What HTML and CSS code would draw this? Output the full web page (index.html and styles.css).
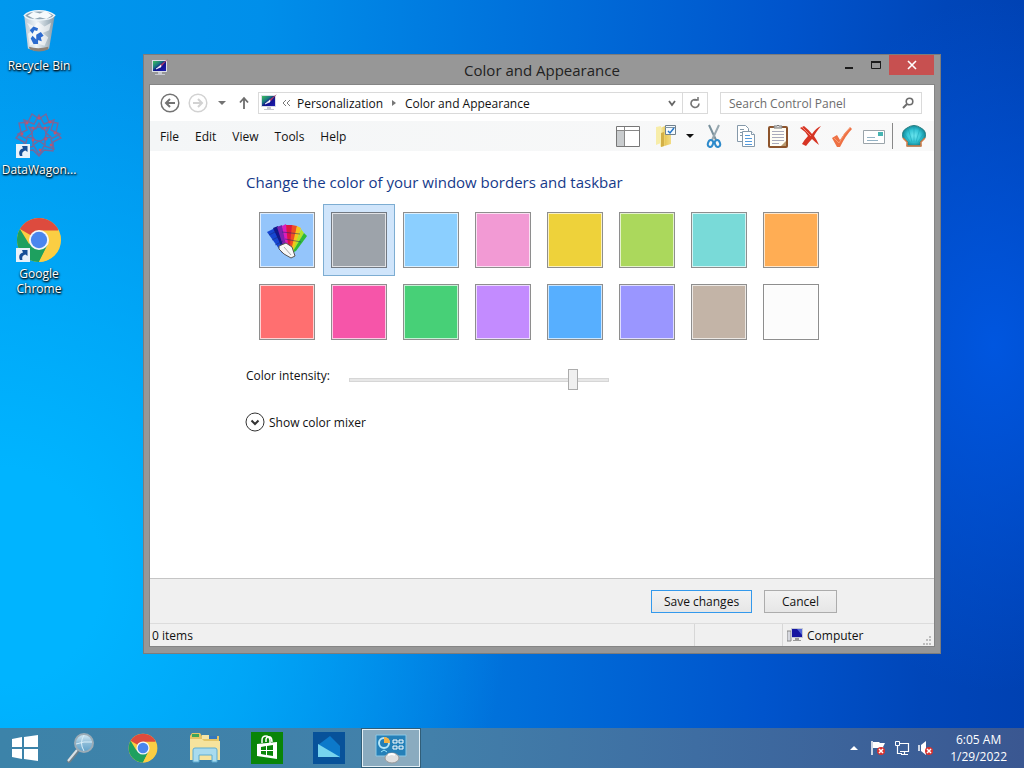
FILE: index.html
```html
<!DOCTYPE html>
<html lang="en">
<head>
<meta charset="utf-8">
<meta name="viewport" content="width=device-width, initial-scale=1">
<title>Color and Appearance</title>
<link rel="stylesheet" href="styles.css">
</head>
<body>
<svg class="defs" width="0" height="0" aria-hidden="true">
  <defs>
    <linearGradient id="screen" x1="0" y1="0" x2="1" y2="1"><stop offset="0" stop-color="#3fbf5a"/><stop offset=".35" stop-color="#1a7a80"/><stop offset=".55" stop-color="#10108c"/><stop offset="1" stop-color="#2020b0"/></linearGradient>
    <linearGradient id="folder" x1="0" y1="0" x2="1" y2="0"><stop offset="0" stop-color="#fbf3b8"/><stop offset=".5" stop-color="#e8c95c"/><stop offset="1" stop-color="#f3dd86"/></linearGradient>
    <linearGradient id="glass" x1="0" y1="0" x2="0" y2="1"><stop offset="0" stop-color="#d8ecf6"/><stop offset=".5" stop-color="#8dbcd8"/><stop offset="1" stop-color="#5fa0c8"/></linearGradient>
    <radialGradient id="shell"><stop offset="0" stop-color="#6fe9f2"/><stop offset=".6" stop-color="#34c3d4"/><stop offset="1" stop-color="#128a9a"/></radialGradient>
    <linearGradient id="bin" x1="0" y1="0" x2="1" y2="0"><stop offset="0" stop-color="#b8c8d4"/><stop offset=".4" stop-color="#eef4f8"/><stop offset="1" stop-color="#8398a6"/></linearGradient>
    <symbol id="chrome" viewBox="0 0 48 48">
      <circle cx="24" cy="24" r="23" fill="#fbce43"/>
      <path d="M24 24 4.100 12.500A23 23 0 0 1 43.900 12.500L43.900 14H24z" fill="#dd4b3e"/>
      <path d="M4.100 12.500A23 23 0 0 0 24 47L33 29.500 24 24 13.500 28z" fill="#1ea05f"/>
      <path d="M24 47 33 29 44 14A23 23 0 0 1 24 47z" fill="#fbce43"/>
      <circle cx="24" cy="24" r="10.500" fill="#f4f6f8"/><circle cx="24" cy="24" r="8.500" fill="#4a86ee"/>
    </symbol>
    <symbol id="shortcut" viewBox="0 0 14 14">
      <path d="M0 0h14v14H0z" fill="#e9f2fa"/>
      <path d="M4 12C2 8 4 5 7 4.500L6 2h5.500v6L9.500 6.500C7 7 5.500 9 6.500 12z" fill="#174f96"/>
    </symbol>
    <symbol id="monitor" viewBox="0 0 18 18">
      <path d="M1 1h15v12H1z" fill="#d9dde6"/><path d="M2 2h13v10H2z" fill="url(#screen)"/>
      <path d="M7 13h4v2h3v1H4v-1h3z" fill="#c7c9d0"/>
      <path d="M17 0 9 6l2 1z" fill="#a83c66"/><path d="m10 6-5 4 5-2z" fill="#fff" stroke="#fff" stroke-width=".6"/>
    </symbol>
  </defs>
</svg>

<div class="desktop">
  <nav class="shortcuts" aria-label="Desktop">
    <a class="shortcut" href="#recycle">
      <svg width="48" height="48" viewBox="-2 -1 52 50" aria-hidden="true">
        <path d="M8 6 12 42q12 5 23 0L41 6z" fill="url(#bin)"/>
        <path d="M8 6q5-5 16-5t17 5q-4 5-17 5T8 6z" fill="#8fa5b4" stroke="#edf5fa" stroke-width="1.500"/>
        <path d="m12 6 6-4 7 2 6-3 7 5-6 4-7-2-6 2z" fill="#f6fafc"/>
        <path d="m11 14 8 4 4-5 7 5 7-4-2 8-7 3 6 5-4 9-9-3-7 3-2-13 4-3z" fill="#fff" opacity=".6"/>
        <path d="m14 22 4-4 5 2-1 3-3-1-2 4zM21 27l5-3 3 4-3 2 1 4-6-2zM15 31l2-3 4 4 2-2v7h-5z" fill="#2c6bcf"/>
        <path d="m13 40q10 3 21 0v3q-10 4-20 0z" fill="#8d8277"/>
      </svg>
      <span>Recycle Bin</span>
    </a>
    <a class="shortcut" href="#datawagon">
      <svg width="48" height="48" viewBox="0 0 48 48" aria-hidden="true">
        <g fill="none" stroke="#77679b" stroke-width="1.400">
          <path d="m17 2 7 5 7-5 3 8 9 1-2 9 5 6-8 4 0 9-9-1-5 6-6-6-9 1 0-9-8-4 5-6-2-9 9-1z"/>
          <path d="m24 3 5 9 10-4-3 10 9 4-9 5 3 10-10-3-5 9-5-9-10 3 3-10-9-5 9-4-3-10 10 4z"/>
          <path d="m24 11 3 6 7-2-3 6 5 4-6 1 0 7-6-4-6 4 0-7-6-1 5-4-3-6 7 2z"/>
          <circle cx="24" cy="22" r="7"/>
        </g>
        <g fill="#c2526e"><circle cx="24" cy="6" r="1.500"/><circle cx="35" cy="10" r="1.500"/><circle cx="40" cy="21" r="1.500"/><circle cx="36" cy="33" r="1.500"/><circle cx="25" cy="38" r="1.500"/><circle cx="12" cy="11" r="1.500"/><circle cx="7" cy="22" r="1.500"/><circle cx="18" cy="16" r="1.500"/><circle cx="30" cy="16" r="1.500"/><circle cx="31" cy="27" r="1.500"/><circle cx="18" cy="28" r="1.500"/></g>
        <use href="#shortcut" x="1" y="32" width="14" height="14"/>
      </svg>
      <span>DataWagon...</span>
    </a>
    <a class="shortcut" href="#chrome-app">
      <svg width="48" height="48" viewBox="0 0 48 48" aria-hidden="true">
        <use href="#chrome" x="1" y="1" width="46" height="46"/>
        <use href="#shortcut" x="1" y="32" width="14" height="14"/>
      </svg>
      <span>Google Chrome</span>
    </a>
  </nav>

  <main class="window">
    <header class="titlebar">
      <svg class="app-icon" width="18" height="18" aria-hidden="true"><use href="#monitor"/></svg>
      <h1>Color and Appearance</h1>
      <div class="controls">
        <button class="control" aria-label="Minimize"><svg width="12" height="12"><path d="M2 8h8v2H2z" fill="#1c1c1c"/></svg></button>
        <button class="control" aria-label="Maximize"><svg width="12" height="12"><path d="M1.500 2.500h9v7h-9z" fill="none" stroke="#1c1c1c"/><path d="M1 2h10v2H1z" fill="#1c1c1c"/></svg></button>
        <button class="control close" aria-label="Close"><svg width="10" height="10"><path d="m1 1 8 8M9 1 1 9" stroke="#fff" stroke-width="1.600"/></svg></button>
      </div>
    </header>

    <div class="client">
      <div class="addressbar">
        <button class="round" aria-label="Back"><svg width="20" height="20" fill="none" stroke="#737373" stroke-width="1.500"><circle cx="10" cy="10" r="8.800"/><path d="M15 10H6m4-4-4 4 4 4" stroke-width="2"/></svg></button>
        <button class="round" aria-label="Forward"><svg width="20" height="20" fill="none" stroke="#d2d2d2" stroke-width="1.500"><circle cx="10" cy="10" r="8.800"/><path d="M5 10h9m-4-4 4 4-4 4" stroke-width="2"/></svg></button>
        <button class="round small" aria-label="Recent locations"><svg width="8" height="8"><path d="M0 2h8L4 6z" fill="#737373"/></svg></button>
        <button class="round up" aria-label="Up"><svg width="12" height="14" fill="none" stroke="#6d6d6d" stroke-width="1.800"><path d="M6 13V2M2 6.500 6 2l4 4.500"/></svg></button>
        <div class="address">
          <svg width="18" height="18" aria-hidden="true"><use href="#monitor"/></svg>
          <svg class="more" width="9" height="8" fill="none" stroke="#777" aria-hidden="true"><path d="M4 1 1 4l3 3M8 1 5 4l3 3"/></svg>
          <a href="#personalization">Personalization</a>
          <svg class="crumb" width="4" height="8" aria-hidden="true"><path d="m0 1 4 3-4 3z" fill="#777"/></svg>
          <a href="#color">Color and Appearance</a>
          <button class="history" aria-label="Previous locations"><svg width="8" height="8" fill="none" stroke="#666" stroke-width="1.800"><path d="m1 2 3 4 3-4"/></svg></button>
          <button class="refresh" aria-label="Refresh"><svg width="12" height="12" fill="none" stroke="#747474" stroke-width="1.600"><path d="M8 3A4 4 0 1 0 10 6.500"/><path d="M5 3h4V0" stroke-width="1.500"/></svg></button>
        </div>
        <div class="search">
          <input type="text" placeholder="Search Control Panel" aria-label="Search Control Panel">
          <svg width="12" height="12" fill="none" stroke="#6c6c6c" stroke-width="1.600" aria-hidden="true"><circle cx="7.500" cy="4.500" r="3.300"/><path d="m5 7-4 4" stroke-width="2"/></svg>
        </div>
      </div>

      <div class="menubar">
        <button>File</button><button>Edit</button><button>View</button><button>Tools</button><button>Help</button>
        <div class="toolbar">
          <button aria-label="Layout"><svg width="24" height="24"><path d="M.5 2.500h23v20H.5z" fill="#fff" stroke="#777"/><path d="M1 7h7v15H1z" fill="#c9ccce"/><path d="M1 6.500h22M8.500 3v19" stroke="#888"/></svg></button>
          <button class="folder" aria-label="Folder options"><svg width="24" height="24"><path d="M2 3 7 2v17l-5 2z" fill="#f7eda9"/><path d="M6 4 11 2v5h6v13L7 23l-1-1z" fill="url(#folder)"/><path d="m7 9 3-1v14l-3 1z" fill="#d3b046"/><path d="M11.500 1.500h10v9h-10z" fill="#f5fbff" stroke="#70808c"/><path d="M11 3.500h10" stroke="#8195a4"/><path d="m14 7 2 2 4-5" fill="none" stroke="#2374c8" stroke-width="1.500"/></svg></button>
          <button class="arrow" aria-label="More options"><svg width="8" height="6"><path d="M0 1h8L4 5z" fill="#111"/></svg></button>
          <button aria-label="Cut"><svg width="24" height="24" fill="none"><path d="M7 1 14 16" stroke="#78909c" stroke-width="2"/><path d="M17 1 10 16" stroke="#98a8b0" stroke-width="2"/><ellipse cx="8.500" cy="19.500" rx="2.500" ry="3.500" transform="rotate(20 8.500 19.500)" stroke="#2d8acb" stroke-width="2"/><ellipse cx="15.500" cy="19.500" rx="2.500" ry="3.500" transform="rotate(-20 15.500 19.500)" stroke="#2d8acb" stroke-width="2"/></svg></button>
          <button aria-label="Copy"><svg width="24" height="24" fill="#fff" stroke="#8599aa"><path d="M3.500 1.500h8l3 3v13h-11z"/><path d="M6 5.500h4M6 8.500h4M6 11.500h4"/><path d="M8.500 7.500h9l3 3v12h-12z"/><path d="M17.500 7.500v3h3"/><path d="M11 11.500h5M11 14.500h7M11 17.500h7M11 20.500h7" stroke="#559bdc"/></svg></button>
          <button aria-label="Paste"><svg width="24" height="24"><rect x="2" y="2" width="20" height="22" rx="2" fill="#8d542c"/><path d="M4 4h16v18H4z" fill="#fffdf5"/><path d="M8 4V2h3q1-2 2 0h3v2z" fill="#ddd" stroke="#777"/><path d="M6 7.500h12M6 10.500h12M6 13.500h12M6 16.500h12M6 19.500h7" stroke="#aab"/><path d="m15 22 5-5v5z" fill="#b89a70"/></svg></button>
          <button aria-label="Delete"><svg width="24" height="24"><path d="M2 4 6 2q5 4 8 8 4-6 9-8-5 6-7 10 3 4 5 9-4-3-7-6-3 3-6 7l-4-2q3-5 6-8Q7 7 2 4z" fill="#d63524"/><path d="m4 3 9 9" stroke="#f18475"/></svg></button>
          <button aria-label="Apply"><svg width="24" height="24"><path d="m2 14 5-3 3 5Q15 8 20 3l2 2q-6 6-12 18H7z" fill="#ee7144"/><path d="m4 14 5 5Q14 9 20 4" fill="none" stroke="#f79a72"/></svg></button>
          <button aria-label="Rename"><svg width="24" height="24"><path d="M1.500 6.500h21v13h-21z" fill="#fff" stroke="#9ba4aa"/><path d="M16 8h5v4h-5z" fill="#46b4b2"/><path d="M5 13.500h8M5 16.500h11" stroke="#93b2c4"/></svg></button>
          <span class="divider"></span>
          <button aria-label="Open shell settings"><svg width="24" height="24"><path d="M6 18 1 14Q-1 7 5 4q7-5 14 0 6 3 4 10l-5 4 1 4H5z" fill="url(#shell)" stroke="#287d80"/><path d="M12 18V2M10 18 6 4M14 18l4-14M8 18 2 9M16 18l6-9" stroke="#179eaf" opacity=".5" fill="none"/><path d="M1 14 5 18v4h14v-4l4-4" fill="none" stroke="#d27b47" stroke-width="1.500"/></svg></button>
        </div>
      </div>

      <form class="panel" id="appearance">
        <h2>Change the color of your window borders and taskbar</h2>
        <div class="swatches" role="radiogroup" aria-label="Window color">
          <label class="cell"><input class="swatch automatic" type="radio" name="color" aria-label="Automatic">
            <svg width="40" height="40" viewBox="0 -3 40 40" aria-hidden="true">
              <path d="m0 9 8-4 14 27-7-2z" fill="#1646d0"/><path d="m6 5 5-2 12 28-6-2z" fill="#10178c"/><path d="m10 4 5-2 8 28-4 2z" fill="#7b22ae"/><path d="m15 3 4-2 6 29-4 2z" fill="#dc1cba"/><path d="m19 2 6 0 1 28-4 2z" fill="#dd1742"/><path d="m25 2 5 1-4 27-4 2z" fill="#ef4d24"/><path d="m30 3 4 2-8 26-3 1z" fill="#f3c51d"/><path d="m34 6 3 4-11 20-2 2z" fill="#b3e329"/><path d="m37 10 3 3-11 15-4 2z" fill="#31ba36"/><path d="m2 12 8-4M5 17l8-4M8 22l8-4M15 9l18 2M18 16l16 3" stroke="#162b70" opacity=".5"/><path d="m12 23 7-3 6 4 3 9-4 2-7-4-5-5z" fill="#f7f7f7" stroke="#555"/><path d="m17 24 7 8" stroke="#aaa"/>
            </svg></label>
          <label class="cell"><input class="swatch gray" type="radio" name="color" aria-label="Gray" checked></label>
          <label class="cell"><input class="swatch sky" type="radio" name="color" aria-label="Sky"></label>
          <label class="cell"><input class="swatch pink" type="radio" name="color" aria-label="Pink"></label>
          <label class="cell"><input class="swatch yellow" type="radio" name="color" aria-label="Yellow"></label>
          <label class="cell"><input class="swatch lime" type="radio" name="color" aria-label="Lime"></label>
          <label class="cell"><input class="swatch aqua" type="radio" name="color" aria-label="Aqua"></label>
          <label class="cell"><input class="swatch orange" type="radio" name="color" aria-label="Orange"></label>
          <label class="cell"><input class="swatch red" type="radio" name="color" aria-label="Red"></label>
          <label class="cell"><input class="swatch magenta" type="radio" name="color" aria-label="Magenta"></label>
          <label class="cell"><input class="swatch green" type="radio" name="color" aria-label="Green"></label>
          <label class="cell"><input class="swatch purple" type="radio" name="color" aria-label="Purple"></label>
          <label class="cell"><input class="swatch blue" type="radio" name="color" aria-label="Blue"></label>
          <label class="cell"><input class="swatch violet" type="radio" name="color" aria-label="Violet"></label>
          <label class="cell"><input class="swatch taupe" type="radio" name="color" aria-label="Taupe"></label>
          <label class="cell"><input class="swatch white" type="radio" name="color" aria-label="White"></label>
        </div>
        <div class="intensity">
          <label for="intensity">Color intensity:</label>
          <input id="intensity" type="range" min="0" max="100" value="88">
        </div>
        <button class="mixer" type="button">
          <svg width="20" height="20" fill="none" stroke="#333"><circle cx="10" cy="10" r="9"/><path d="m6.500 8.500 3.500 3.500 3.500-3.500" stroke-width="2"/></svg>
          Show color mixer
        </button>
      </form>

      <div class="actions">
        <button class="push primary" form="appearance">Save changes</button>
        <button class="push">Cancel</button>
      </div>
      <footer class="status">
        <span class="count">0 items</span>
        <span class="blank"></span>
        <span class="zone">
          <svg width="16" height="16" aria-hidden="true"><path d="M0 4h4v10H0z" fill="#d6d8df" stroke="#888"/><path d="M4 1h12v10H4z" fill="#c3c8d5"/><path d="M5 2h10v8H5z" fill="#1515a0"/><path d="M10 2h5v6z" fill="#5265d8"/><path d="M8 11h4v2h2v1H6v-1h2z" fill="#999"/></svg>
          Computer
        </span>
        <svg class="grip" width="10" height="10" fill="#bdbdbd" aria-hidden="true"><path d="M7 0h2v2H7zM4 3h2v2H4zM7 3h2v2H7zM1 7h2v2H1zM4 7h2v2H4zM7 7h2v2H7z"/></svg>
      </footer>
    </div>
  </main>
</div>

<footer class="taskbar">
  <button class="task start" aria-label="Start"><svg width="28" height="28" fill="#fff"><path d="M1 5 11 3v10H1zM13 3 27 1v12H13zM1 15h10v10L1 23zM13 15h14v12l-14-2z"/></svg></button>
  <button class="task" aria-label="Search"><svg width="32" height="32"><path d="m13 18-9 11" stroke="#6e7f89" stroke-width="4" stroke-linecap="round"/><path d="m12 18-9 11" stroke="#d7e1e6" stroke-width="2"/><circle cx="19" cy="11" r="9" fill="url(#glass)" stroke="#9bacb7" stroke-width="2"/><path d="M11 12q8-3 16-2M19 3q-5 8 0 16" fill="none" stroke="#d9eef8"/></svg></button>
  <button class="task" aria-label="Google Chrome"><svg width="30" height="30"><use href="#chrome"/></svg></button>
  <button class="task" aria-label="File Explorer"><svg width="34" height="34"><path d="M2 5 4 2h8l2 3h17v23H2z" fill="#e5c567"/><path d="M4 3h7v3H4z" fill="#3da65a"/><path d="M14 4h7v4h-7z" fill="#f5e5a7"/><path d="M21 5h8v3h-8z" fill="#3477bc"/><path d="M2 8h12l2 2h16v19H2z" fill="#f6e39d"/><path d="M5 19q0-2 2-2h20q2 0 2 2v12h-5v-7H11v7H5z" fill="#a8dbef" stroke="#5facd0"/></svg></button>
  <button class="task" aria-label="Store"><svg width="32" height="32"><path d="M0 0h32v32H0z" fill="#098509"/><path d="m6 12 20-2v17L6 24z" fill="#fff"/><path d="M11 11V8q0-4 4-4 3 0 4 4v3M15 10V7q1-3 4-2 2 1 2 5" fill="none" stroke="#fff" stroke-width="1.500"/><path d="m10 15 5-1v4h-5zM16 14l6-1v5h-6zM10 19h5v4l-5-1zM16 19h6v5l-6-1z" fill="#098509"/></svg></button>
  <button class="task" aria-label="Photos"><svg width="32" height="32"><path d="M0 0h32v32H0z" fill="#07529a"/><path d="m5 13 12-9 10 10v12z" fill="#0c79ca"/><path d="M5 12 27 25H5z" fill="#76d4ef"/></svg></button>
  <button class="task active" aria-label="Control Panel"><svg width="34" height="32"><path d="M2 3h30v21H2z" fill="#2580b8" stroke="#8cc8e5"/><circle cx="10" cy="11" r="5" fill="none" stroke="#b7e6f7" stroke-width="2"/><path d="M10 11V5q6 0 6 6z" fill="#f5b143"/><path d="M19 8h4v3h-4zM25 8h4v3h-4zM19 14h4v3h-4zM25 14h4v3h-4z" fill="none" stroke="#fff"/><path d="m7 20 3-2 3 2" fill="none" stroke="#9ce8ff"/><ellipse cx="18" cy="26" rx="7" ry="5" fill="#e0e0e0" stroke="#999"/><path d="M14 23q4-2 7 0" fill="none" stroke="#fff" stroke-width="2"/></svg></button>
  <div class="tray">
    <button aria-label="Show hidden icons"><svg width="8" height="16"><path d="m0 10 4-4 4 4z" fill="#fff"/></svg></button>
    <button aria-label="Action Center"><svg width="16" height="16"><path d="M2 1v14" stroke="#fff" stroke-width="1.500"/><path d="M3 2h6l1 1h5l-2 4 1 3H9L8 8H3z" fill="#fff"/><circle cx="11" cy="11" r="4" fill="#d8322f"/><path d="m9 9 4 4m0-4-4 4" stroke="#fff" stroke-width="1.500"/></svg></button>
    <button aria-label="Network"><svg width="16" height="16" fill="none" stroke="#fff"><path d="M6 3.500h8.500v8H6M10.500 11v3M7 14.500h7M3.500 6v7.500H8" stroke-width="1.200"/><path d="M1.500 1.500h4v4h-4z"/></svg></button>
    <button aria-label="Volume"><svg width="16" height="16"><path d="M1 5v6" stroke="#fff" stroke-width="1.500"/><path d="m3 5 5-4v14l-5-4z" fill="#fff"/><circle cx="11" cy="11" r="4" fill="#d8322f"/><path d="m9 9 4 4m0-4-4 4" stroke="#fff" stroke-width="1.500"/></svg></button>
    <time datetime="2022-01-29T06:05">6:05 AM<br>1/29/2022</time>
  </div>
</footer>
</body>
</html>
```
FILE: styles.css
```css
* { box-sizing: border-box; }

body {
  margin: 0;
  min-height: 100vh;
  display: flex;
  flex-direction: column;
  font: 12px/15px "Open Sans", "Noto Sans", sans-serif;
  color: #111;
  background:
    radial-gradient(ellipse 50% 70% at 0% 75%, #00b4ff 20%, #00b4ff00 100%),
    radial-gradient(ellipse 22% 45% at 97% 45%, #0056df 0%, #0056df00 100%),
    linear-gradient(92deg, #0098ee 0%, #008fea 25%, #0073dc 48%, #0054cc 75%, #0046b9 90%, #0041b2 100%);
}

.defs { position: absolute; }
svg { display: block; flex: none; }

button {
  font: inherit;
  color: inherit;
  margin: 0;
  padding: 0;
  border: 0;
  background: none;
}

a { color: inherit; text-decoration: none; }

.desktop { flex: 1; display: flex; }

.shortcuts {
  flex: none;
  width: 143px;
  padding: 8px 0 0 1px;
  display: flex;
  flex-direction: column;
  gap: 39px;
}

.shortcut {
  width: 76px;
  display: flex;
  flex-direction: column;
  align-items: center;
  gap: 2px;
  text-align: center;
  color: #fff;
  text-shadow: 1px 1px 2px #000, 0 1px 2px #000;
}

.window {
  flex: 1;
  min-width: 0;
  margin: 54px 83px 74px 0;
  padding: 0 6px 7px;
  display: flex;
  flex-direction: column;
  background: #979797;
  border: 1px solid #7c7c7c;
}

.titlebar {
  height: 30px;
  display: grid;
  grid-template-columns: 100px 1fr 100px;
}

.app-icon { margin: 4px 1px; }

.titlebar h1 {
  margin: 0;
  font-size: 15px;
  line-height: 30px;
  font-weight: 400;
  text-align: center;
  color: #222;
}

.controls { display: flex; justify-content: flex-end; height: 20px; }
.control { width: 27px; display: grid; place-items: center; flex: none; }
.control.close { width: 45px; background: #c75050; }

.client {
  flex: 1;
  display: flex;
  flex-direction: column;
  background: #fff;
  outline: 1px solid #858585;
}

.addressbar {
  height: 36px;
  padding: 0 12px 0 10px;
  display: flex;
  align-items: center;
}

.round { width: 20px; display: grid; place-items: center; margin-right: 8px; }
.round.small { width: 16px; margin: 0 4px 0 -2px; }
.round.up { margin: 0 4px 0 0; }

.address {
  flex: 1;
  min-width: 0;
  height: 22px;
  display: flex;
  align-items: center;
  gap: 4px;
  padding-left: 1px;
  border: 1px solid #dadada;
  white-space: nowrap;
}

.more { margin-right: 2px; }
.crumb { margin: 0 5px; }
.history { margin-left: auto; width: 10px; }
.refresh { width: 25px; height: 20px; border-left: 1px solid #dadada; display: grid; place-items: center; }

.search {
  width: 202px;
  height: 22px;
  margin-left: 12px;
  padding: 0 7px 0 8px;
  display: flex;
  align-items: center;
  border: 1px solid #dadada;
}

.search input {
  flex: 1;
  min-width: 0;
  padding: 0;
  border: 0;
  font: inherit;
  background: none;
}

.search input::placeholder { color: #6d6d6d; opacity: 1; }

.menubar {
  height: 30px;
  padding: 0 8px 0 10px;
  display: flex;
  align-items: center;
  gap: 16px;
  background: linear-gradient(90deg, #f4f6f7, #f9f9f9);
}

.toolbar { margin-left: auto; display: flex; align-items: center; gap: 8px; }
.toolbar .folder { margin-left: 6px; }
.toolbar .divider { width: 1px; height: 26px; margin: 0 1px 0 -2px; background: #888; }

.panel { flex: 1; padding: 21px 32px 0 96px; }

.panel h2 {
  margin: 0 0 12px;
  font-size: 15px;
  line-height: 20px;
  font-weight: 400;
  color: #163a8a;
}

.swatches {
  display: grid;
  grid-template-columns: repeat(auto-fill, 72px);
  margin-left: 5px;
  max-width: 576px;
}

.cell {
  height: 72px;
  display: grid;
  place-items: center;
  border: 1px solid transparent;
}

.cell > * { grid-area: 1 / 1; }
.cell svg { pointer-events: none; }
.cell:has(:checked) { background: #d0e5fb; border-color: #7dadd2; }

.swatch {
  appearance: none;
  width: 56px;
  height: 56px;
  margin: 0;
  border: 1px solid #8e8e8e;
  box-shadow: inset 0 0 0 1px #ffffffb0;
}

.automatic { background: #94c5fb; }
.gray { background: #9da3aa; border-color: #727982; }
.sky { background: #8bcfff; }
.pink { background: #f29ad4; }
.yellow { background: #eed23a; }
.lime { background: #abd85c; }
.aqua { background: #79dad8; }
.orange { background: #ffad54; }
.red { background: #ff6f70; }
.magenta { background: #f655a9; }
.green { background: #47d077; }
.purple { background: #c38bff; }
.blue { background: #57afff; }
.violet { background: #9a96ff; }
.taupe { background: #c3b4a7; }
.white { background: #fcfcfc; }

.intensity { display: flex; align-items: flex-start; margin-top: 20px; }
.intensity label { width: 103px; }

#intensity {
  appearance: none;
  width: 260px;
  height: 24px;
  margin: 0;
  background: none;
}

#intensity::-webkit-slider-runnable-track {
  height: 4px;
  background: #e7e7e7;
  border: 1px solid #d6d6d6;
}

#intensity::-webkit-slider-thumb {
  appearance: none;
  width: 10px;
  height: 21px;
  margin-top: -10px;
  background: #f0f0f0;
  border: 1px solid #acacac;
}

.mixer { display: flex; align-items: center; gap: 4px; margin: 20px 0 0 -1px; }

.actions {
  height: 45px;
  padding-right: 97px;
  display: flex;
  align-items: center;
  justify-content: flex-end;
  gap: 12px;
  background: #f0f0f0;
  border-top: 1px solid #c5c5c5;
}

.push {
  width: 73px;
  height: 23px;
  border: 1px solid #acacac;
  background: linear-gradient(#f2f2f2, #e6e6e6);
}

.push.primary { width: 101px; border: 1px solid #3399ec; }

.status {
  height: 23px;
  display: grid;
  grid-template-columns: 1fr 88px 140px 12px;
  align-items: center;
  background: #f0f0f0;
  border-top: 1px solid #dcdcdc;
}

.count { padding-left: 2px; }
.blank, .zone { height: 22px; border-left: 1px solid #d7d7d7; }
.zone { display: flex; align-items: center; gap: 4px; padding-left: 4px; }
.grip { align-self: end; }

.taskbar {
  height: 40px;
  display: flex;
  background: linear-gradient(90deg, #3c83a9, #4280aa 42%, #3e6da2 68%, #3a5791);
}

.task { width: 60px; margin-right: 2px; display: grid; place-items: center; flex: none; }
.task.start { width: 49px; }
.task.active { background: #8aabbf; outline: 1px solid #315e78; outline-offset: -1px; box-shadow: inset 0 0 0 2px #e4f0f6; }

.tray { margin-left: auto; padding-right: 17px; display: flex; align-items: center; gap: 8px; color: #fff; }
.tray button:first-child { margin-right: 4px; }
.tray time { margin-left: 8px; line-height: 17px; text-align: center; }
```
